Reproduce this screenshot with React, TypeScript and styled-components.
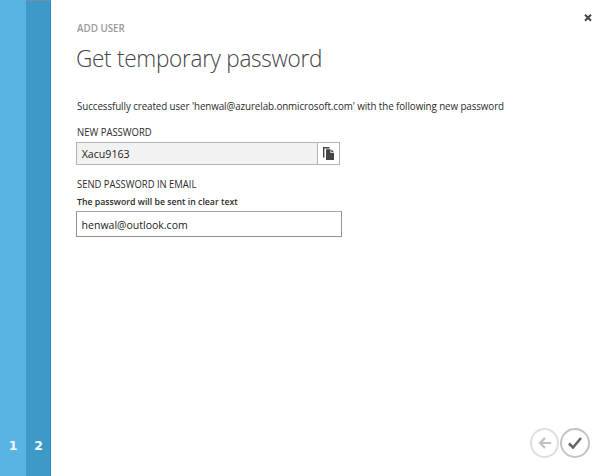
import React from 'react';
import styled, { createGlobalStyle } from 'styled-components';

const GlobalStyle = createGlobalStyle`
  * { box-sizing: border-box; }
  body { margin: 0; background: #fff; overflow: hidden; }
  button { padding: 0; border: 0; background: none; font: inherit; }
`;

const Dialog = styled.div`
  display: flex;
  width: 604px;
  height: 476px;
  background: #fff;
  font-family: 'Open Sans', 'Noto Sans', sans-serif;
  color: #333;
`;

const Step = styled.div<{ $active?: boolean }>`
  display: flex;
  flex: none;
  align-items: flex-end;
  justify-content: center;
  width: ${p => (p.$active ? 25 : 26)}px;
  padding-bottom: 22px;
  padding-left: ${p => (p.$active ? 1 : 0)}px;
  border-top: 1px solid ${p => (p.$active ? '#6d93a8' : '#57b2e0')};
  border-right: ${p => (p.$active ? '1px solid #2a8fc6' : '0')};
  background: ${p => (p.$active ? '#3d9ac8' : '#59b4e2')};
  color: #f4fafd;
  font: bold 12.5px/16px 'DejaVu Sans', sans-serif;
`;

const Main = styled.main`
  display: flex;
  flex: 1;
  flex-direction: column;
  padding: 10px 14px 18px 26px;
`;

const Header = styled.header`
  display: flex;
  justify-content: space-between;
  height: 34px;
`;

const Line = styled.div<{
  $size: number; $height: number; $spacing?: number; $color?: string; $weight?: number; $condense?: number;
}>`
  flex: none;
  height: ${p => p.$height}px;
  font-size: ${p => p.$size}px;
  line-height: ${p => p.$height}px;
  letter-spacing: ${p => p.$spacing ?? 0}px;
  color: ${p => p.$color ?? '#2b2b2b'};
  font-weight: ${p => p.$weight ?? 400};
  transform: scaleX(${p => p.$condense ?? 1});
  transform-origin: left;
  white-space: nowrap;
`;

const Eyebrow = styled(Line)`margin-top: 10px;`;

const Title = styled.h1`
  margin: 0 0 25px -1px;
  height: 28px;
  font-size: 24px;
  font-weight: 300;
  line-height: 28px;
  letter-spacing: -0.3px;
  transform: scaleX(0.939);
  transform-origin: left;
  color: #444;
  white-space: nowrap;
`;

const CloseButton = styled.button`
  width: 8px;
  height: 16px;
  margin-right: -2px;
  svg { display: block; }
`;

const Field = styled.section<{ $gap: number }>`
  display: flex;
  flex-direction: column;
  margin-top: ${p => p.$gap}px;
`;

const InputRow = styled.div`
  display: flex;
  width: 264px;
  height: 23px;
  margin: 2px 0 0 -1px;
  border: 1px solid #b4b4b4;
  background: #f2f2f2;
`;

const Value = styled(Line)`
  flex: 1;
  padding-left: 5px;
`;

const CopyButton = styled.button`
  display: flex;
  align-items: center;
  justify-content: center;
  width: 22px;
  padding-bottom: 1px;
  border-left: 1px solid #b4b4b4;
  background: #fff;
`;

const EmailBox = styled.div`
  display: flex;
  width: 266px;
  height: 26px;
  margin: -1px 0 0 -1px;
  border: 1px solid #929292;
  border-top-color: #a8a8a8;
`;

const Footer = styled.footer`
  display: flex;
  justify-content: flex-end;
  gap: 1px;
  margin-top: auto;
`;

const RoundButton = styled.button<{ $muted?: boolean }>`
  display: flex;
  align-items: center;
  justify-content: center;
  width: ${p => (p.$muted ? 29 : 30)}px;
  height: 30px;
  border: 2px solid ${p => (p.$muted ? '#dedede' : '#c3c3c3')};
  border-radius: 50%;
  color: ${p => (p.$muted ? '#c0c0c0' : '#666')};
`;

export default function App() {
  return (
    <>
      <GlobalStyle />
      <Dialog>
        <Step>1</Step>
        <Step $active>2</Step>
        <Main>
          <Header>
            <Eyebrow $size={10} $height={16} $color="#999" $weight={600} $condense={0.98}>ADD USER</Eyebrow>
            <CloseButton aria-label="Close">
              <svg width="8" height="16" viewBox="0 0 8 16">
                <path d="M1 4.8L7 10.8M7 4.8L1 10.8" stroke="#444" strokeWidth="2" />
              </svg>
            </CloseButton>
          </Header>
          <Title>Get temporary password</Title>
          <Line $size={10.5} $height={18} $spacing={-0.1} $condense={0.934}>
            Successfully created user 'henwal@azurelab.onmicrosoft.com' with the following new password
          </Line>
          <Field $gap={9}>
            <Line $size={10} $height={16} $condense={0.95}>NEW PASSWORD</Line>
            <InputRow>
              <Value $size={11.5} $height={21} $color="#222" $condense={0.925}>Xacu9163</Value>
              <CopyButton aria-label="Copy password">
                <svg width="11" height="13" viewBox="0 0 11 13">
                  <path d="M0 0h6.5v1.4H1.4V10.5H0z" fill="#444" />
                  <path d="M3 2.2h4.5V6H11v7H3z" fill="#444" />
                  <path d="M8.3 2.2L11 5.2H8.3z" fill="#444" />
                </svg>
              </CopyButton>
            </InputRow>
          </Field>
          <Field $gap={11}>
            <Line $size={10} $height={16} $condense={0.943}>SEND PASSWORD IN EMAIL</Line>
            <Line $size={9.5} $height={20} $weight={600} $condense={0.92}>The password will be sent in clear text</Line>
            <EmailBox>
              <Value $size={11.5} $height={25} $color="#222" $condense={0.915}>henwal@outlook.com</Value>
            </EmailBox>
          </Field>
          <Footer>
            <RoundButton $muted aria-label="Back">
              <svg width="13" height="12" viewBox="0 0 13 12" fill="none" stroke="currentColor" strokeWidth="2.2">
                <path d="M7 1L2 6l5 5M2 6h11" />
              </svg>
            </RoundButton>
            <RoundButton aria-label="Finish">
              <svg width="14" height="12" viewBox="0 0 14 12" fill="none" stroke="currentColor" strokeWidth="2.6">
                <path d="M1 6.5l4 4L13 1" />
              </svg>
            </RoundButton>
          </Footer>
        </Main>
      </Dialog>
    </>
  );
}
